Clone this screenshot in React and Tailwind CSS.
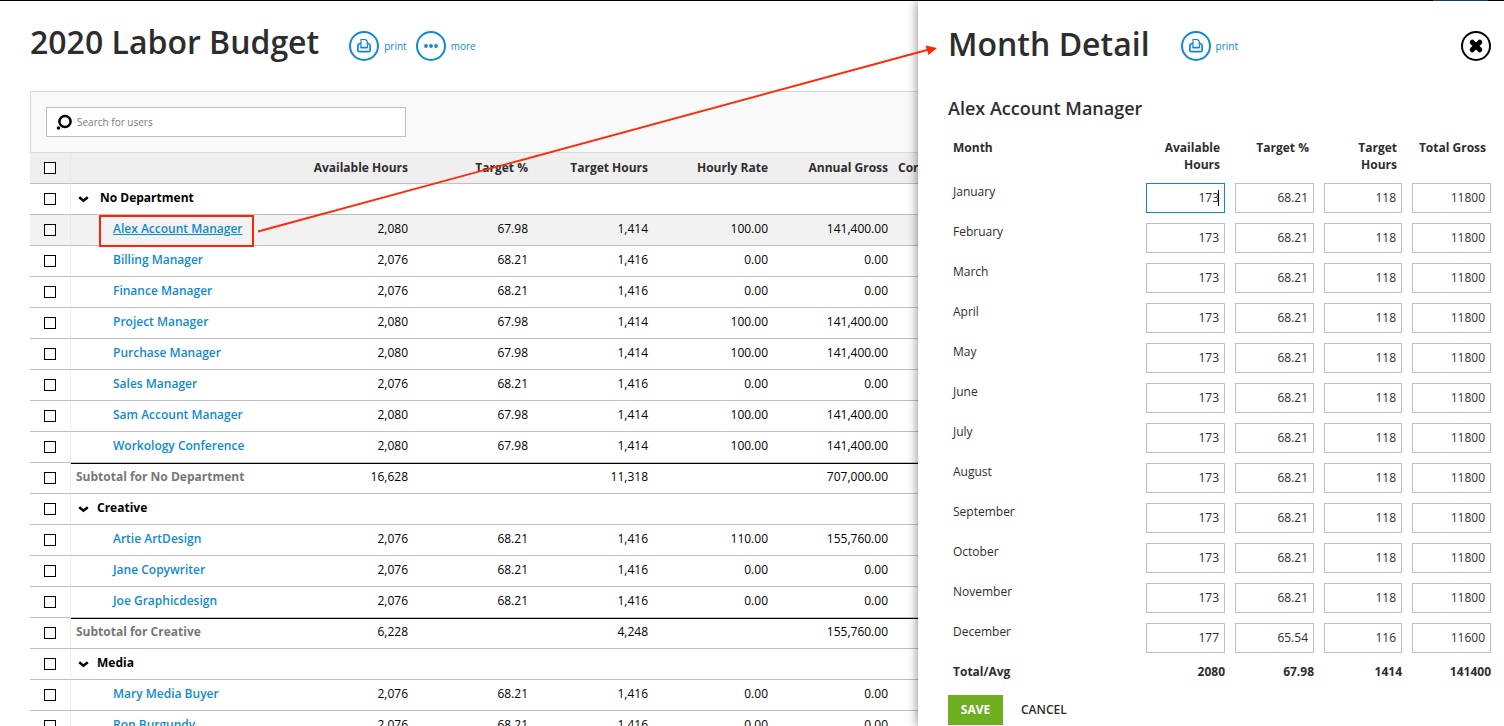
const groups = [
  {
    name: "No Department",
    people: [
      ["Alex Account Manager", "2,080", "67.98", "1,414", "100.00", "141,400.00"],
      ["Billing Manager", "2,076", "68.21", "1,416", "0.00", "0.00"],
      ["Finance Manager", "2,076", "68.21", "1,416", "0.00", "0.00"],
      ["Project Manager", "2,080", "67.98", "1,414", "100.00", "141,400.00"],
      ["Purchase Manager", "2,080", "67.98", "1,414", "100.00", "141,400.00"],
      ["Sales Manager", "2,076", "68.21", "1,416", "0.00", "0.00"],
      ["Sam Account Manager", "2,080", "67.98", "1,414", "100.00", "141,400.00"],
      ["Workology Conference", "2,080", "67.98", "1,414", "100.00", "141,400.00"],
    ],
    subtotal: ["16,628", "", "11,318", "", "707,000.00"],
  },
  {
    name: "Creative",
    people: [
      ["Artie ArtDesign", "2,076", "68.21", "1,416", "110.00", "155,760.00"],
      ["Jane Copywriter", "2,076", "68.21", "1,416", "0.00", "0.00"],
      ["Joe Graphicdesign", "2,076", "68.21", "1,416", "0.00", "0.00"],
    ],
    subtotal: ["6,228", "", "4,248", "", "155,760.00"],
  },
  {
    name: "Media",
    people: [
      ["Mary Media Buyer", "2,076", "68.21", "1,416", "0.00", "0.00"],
      ["Ron Burgundy", "2,076", "68.21", "1,416", "0.00", "0.00"],
    ],
  },
];

const months = [
  "January", "February", "March", "April", "May", "June",
  "July", "August", "September", "October", "November", "December",
].map((name) => ({
  name,
  values: name === "December" ? ["177", "65.54", "116", "11600"] : ["173", "68.21", "118", "11800"],
}));

const detailColumns = ["Available Hours", "Target %", "Target Hours", "Total Gross"];

function PrintIcon() {
  return (
    <svg width="16" height="16" viewBox="0 0 16 16" fill="none" stroke="currentColor" aria-hidden="true">
      <path d="M5 9.500V1.500h4.500l1.800 1.800v6.200z" strokeWidth="1.200" />
      <path d="M5 5.500H3.500L1.900 7.200v5.300q0 1.200 1.200 1.200h9.800q1.200 0 1.200-1.200V7.200L12.500 5.500h-1.200M4.500 9.700h7" strokeWidth="1.700" />
    </svg>
  );
}

function MoreIcon() {
  return (
    <svg width="16" height="16" viewBox="0 0 16 16" fill="currentColor" aria-hidden="true">
      <circle cx="3" cy="8" r="1.900" />
      <circle cx="8" cy="8" r="1.900" />
      <circle cx="13" cy="8" r="1.900" />
    </svg>
  );
}

function RoundAction({ icon, children }) {
  return (
    <button type="button" className="flex items-center gap-[5px] text-[10px] text-[#0f8ad0]">
      <span className="flex size-[30px] items-center justify-center rounded-full border-2 border-[#0f8ad0]">{icon}</span>
      {children}
    </button>
  );
}

function RowCheck({ label }) {
  return (
    <td className="border-r border-b border-r-[#e0e0e0] border-b-[#bfbfbf] align-middle [border-right-style:dotted]">
      <input
        type="checkbox"
        aria-label={label}
        className="mx-auto block size-3 appearance-none border border-black bg-white"
      />
    </td>
  );
}

function Group({ group, first }) {
  return (
    <tbody>
      <tr className="h-[31px]">
        <RowCheck label={"Select " + group.name} />
        <td colSpan={7} className="border-b border-[#bfbfbf] pb-[2px] pl-[7px] font-bold text-black">
          <button type="button" className={"flex items-center " + (first ? "gap-[11px]" : "gap-2")}>
            <svg width="11" height="7" viewBox="0 0 11 7" fill="none" stroke="currentColor" strokeWidth="2.600" className="mt-[3px]" aria-hidden="true">
              <path d="M1.200 1.300l4.300 3.400 4.300-3.400" />
            </svg>
            {group.name}
          </button>
        </td>
      </tr>
      {group.people.map(([name, ...cells], i) => {
        const active = first && i === 0;
        return (
          <tr key={name} className={active ? "h-[31px] bg-[#f2f2f2]" : "h-[31px]"}>
            <RowCheck label={"Select " + name} />
            <td className="relative border-b border-[#bfbfbf] pb-[3px] pl-[42px]">
              <a href="#detail" className={active ? "font-semibold text-[#0f8ad0] underline" : "font-semibold text-[#0f8ad0]"}>
                {name}
              </a>
              {active && <span className="pointer-events-none absolute top-0 left-7 h-8 w-[155px] border-2 border-[#ff2205]" />}
            </td>
            {cells.map((c, j) => (
              <td key={j} className="border-b border-[#bfbfbf] pr-[5px] pb-[3px] text-right text-black">{c}</td>
            ))}
            <td className="border-b border-[#bfbfbf]" />
          </tr>
        );
      })}
      {group.subtotal && (
        <tr className="h-[31px]">
          <RowCheck label={"Select subtotal for " + group.name} />
          <td className="border-t border-b border-t-black border-b-[#bfbfbf] pb-[3px] pl-[5px] font-bold text-[#777]">
            Subtotal for {group.name}
          </td>
          {group.subtotal.map((c, j) => (
            <td key={j} className="border-t border-b border-t-black border-b-[#bfbfbf] pr-[5px] pb-[3px] text-right text-black">{c}</td>
          ))}
          <td className="border-t border-b border-t-black border-b-[#bfbfbf]" />
        </tr>
      )}
    </tbody>
  );
}

function BudgetPage() {
  return (
    <main className="min-w-0 flex-1 overflow-hidden pl-[30px]">
      <header className="flex h-[90px] items-center gap-[30px]">
        <h1 className="pb-2 text-[32px] font-semibold whitespace-nowrap">2020 Labor Budget</h1>
        <div className="flex gap-[9px]">
          <RoundAction icon={<PrintIcon />}>print</RoundAction>
          <RoundAction icon={<MoreIcon />}>more</RoundAction>
        </div>
      </header>
      <div className="border-t border-l border-[#d9d9d9] bg-[#f9f9f9] p-[15px]">
        <label className="flex h-[30px] w-[360px] items-center gap-1 border border-[#bfbfbf] bg-white pl-[9px]">
          <svg width="17" height="17" viewBox="0 0 17 17" fill="none" aria-hidden="true">
            <circle cx="9" cy="7.500" r="5.600" stroke="#000" strokeWidth="2.500" />
            <circle cx="2.500" cy="14" r="1.800" fill="#000" />
          </svg>
          <input
            type="text"
            aria-label="Search for users"
            placeholder="Search for users"
            className="min-w-0 flex-1 text-[10px] outline-none placeholder:text-[#7a7a7a]"
          />
        </label>
      </div>
      <table className="w-[983px] table-fixed border-separate border-spacing-0 text-[12px]">
        <colgroup>
          <col className="w-[41px]" />
          <col />
          <col className="w-[120px]" />
          <col className="w-[120px]" />
          <col className="w-[120px]" />
          <col className="w-[120px]" />
          <col className="w-[120px]" />
          <col className="w-[120px]" />
        </colgroup>
        <thead>
          <tr className="h-8 bg-[#efefef] text-right whitespace-nowrap">
            <th className="border-t border-r border-b border-t-[#d9d9d9] border-r-[#e0e0e0] border-b-[#bfbfbf] [border-right-style:dotted]">
              <input type="checkbox" aria-label="Select all" className="mx-auto block size-3 appearance-none border border-black bg-white" />
            </th>
            {["", "Available Hours", "Target %", "Target Hours", "Hourly Rate", "Annual Gross"].map((h) => (
              <th key={h} className="border-t border-b border-t-[#d9d9d9] border-b-[#bfbfbf] pr-[5px] font-bold">{h}</th>
            ))}
            <th className="border-t border-b border-t-[#d9d9d9] border-b-[#bfbfbf] pl-[5px] text-left font-bold">Con</th>
          </tr>
        </thead>
        {groups.map((g, i) => (
          <Group key={g.name} group={g} first={i === 0} />
        ))}
      </table>
    </main>
  );
}

function MonthDetail() {
  return (
    <aside id="detail" className="relative w-[586px] shrink-0 bg-white pr-2 pl-[30px] shadow-[0_0_10px_rgba(0,0,0,0.5)]">
      <header className="flex h-[90px] items-center pr-[5px]">
        <h2 className="mr-[31px] pb-1 text-[32px] font-semibold whitespace-nowrap">Month Detail</h2>
        <RoundAction icon={<PrintIcon />}>print</RoundAction>
        <button type="button" aria-label="Close" className="ml-auto flex size-[30px] items-center justify-center rounded-full border-2 border-black">
          <svg width="16" height="16" viewBox="0 0 16 16" fill="none" stroke="#000" strokeWidth="5" strokeLinecap="round" aria-hidden="true">
            <path d="M4.200 4.200l7.600 7.600M11.800 4.200l-7.600 7.600" />
          </svg>
        </button>
      </header>
      <h3 className="h-[43px] pt-[5px] text-[18px] leading-[25px] font-semibold">Alex Account Manager</h3>
      <table className="w-full table-fixed border-separate border-spacing-0 text-[12px] leading-[17px]">
        <colgroup>
          <col />
          <col className="w-[89px]" />
          <col className="w-[89px]" />
          <col className="w-[88px]" />
          <col className="w-[89px]" />
        </colgroup>
        <thead>
          <tr className="align-top">
            <th className="p-[5px] text-left font-bold">Month</th>
            {detailColumns.map((c) => (
              <th key={c} className="py-[5px] pr-[10px] pl-[5px] text-right font-bold">{c}</th>
            ))}
          </tr>
        </thead>
        <tbody>
          {months.map(({ name, values }, r) => (
            <tr key={name} className="align-top">
              <td className="p-[5px]">{name}</td>
              {values.map((v, i) => {
                const focused = r === 0 && i === 0;
                return (
                  <td key={i} className="relative p-[5px]">
                    <input
                      type="text"
                      defaultValue={v}
                      aria-label={name + " " + detailColumns[i]}
                      className={
                        "block h-[30px] w-full border pr-[5px] pb-[2px] text-right outline-none " +
                        (focused ? "border-[#0f8ad0]" : "border-[#bfbfbf]")
                      }
                    />
                    {focused && <span className="absolute top-3 right-[11px] h-4 w-px bg-black" />}
                  </td>
                );
              })}
            </tr>
          ))}
        </tbody>
        <tfoot>
          <tr className="font-bold">
            <td className="p-[5px]">Total/Avg</td>
            {["2080", "67.98", "1414", "141400"].map((v) => (
              <td key={v} className="p-[5px] text-right">{v}</td>
            ))}
          </tr>
        </tfoot>
      </table>
      <div className="mt-[10px] flex gap-[18px] text-[12px]">
        <button type="button" className="h-[30px] w-[55px] bg-[#6fae20] font-bold text-white">SAVE</button>
        <button type="button" className="font-semibold">CANCEL</button>
      </div>
    </aside>
  );
}

export default function App() {
  return (
    <div className="relative flex h-screen flex-col overflow-hidden bg-white font-['Open_Sans','Noto_Sans',sans-serif] text-[#2d2d2d]">
      <div className="flex h-px shrink-0 justify-end bg-black pr-4">
        <div className="w-[55px] bg-[#0d5a85]" />
      </div>
      <div className="flex min-h-0 flex-1">
        <BudgetPage />
        <MonthDetail />
      </div>
      <svg width="690" height="200" viewBox="0 0 690 200" className="pointer-events-none absolute top-10 left-[250px]" aria-hidden="true">
        <path d="M8 191.500L677 10" stroke="#ff2a0a" strokeWidth="1.900" fill="none" />
        <path d="M687 8l-8.500 7-3-9.500z" fill="#ff2205" />
      </svg>
    </div>
  );
}
